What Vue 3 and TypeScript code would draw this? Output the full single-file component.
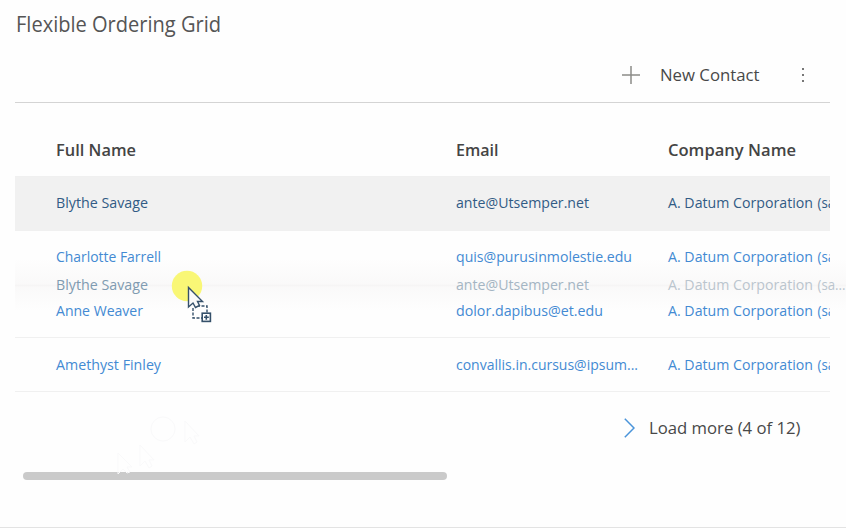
<script setup lang="ts">
interface Contact {
  name: string
  email: string
  nameWidth: number
  emailWidth: number
  state?: 'dragged' | 'target'
}

const company = 'A. Datum Corporation'
const companySuffix = '(sa...'

const contacts: Contact[] = [
  { name: 'Blythe Savage', email: 'ante@Utsemper.net', nameWidth: 92, emailWidth: 133, state: 'dragged' },
  { name: 'Charlotte Farrell', email: 'quis@purusinmolestie.edu', nameWidth: 105, emailWidth: 176, state: 'target' },
  { name: 'Anne Weaver', email: 'dolor.dapibus@et.edu', nameWidth: 87, emailWidth: 147 },
  { name: 'Amethyst Finley', email: 'convallis.in.cursus@ipsum...', nameWidth: 105, emailWidth: 182 },
]
</script>

<template>
  <main class="page">
    <h1 class="title"><svg class="fit" width="206" height="32"><text x="0" y="22" textLength="205" lengthAdjust="spacingAndGlyphs">Flexible Ordering Grid</text></svg></h1>

    <div class="toolbar">
      <button class="command">
        <svg class="plus" width="18" height="18" viewBox="0 0 18 18"><path d="M9 0V18M0 9H18" /></svg>
        <svg class="fit" width="101" height="24"><text x="0" y="18" textLength="99.5" lengthAdjust="spacingAndGlyphs">New Contact</text></svg>
      </button>
      <button class="more" aria-label="More commands">
        <svg width="4" height="16" viewBox="0 0 4 16"><path d="M1 1h2v2H1zM1 7h2v2H1zM1 13h2v2H1z" /></svg>
      </button>
    </div>

    <section class="grid">
      <div class="row header">
        <svg class="fit" width="90" height="24"><text x="0" y="18" textLength="80" lengthAdjust="spacingAndGlyphs">Full Name</text></svg>
        <svg class="fit" width="90" height="24"><text x="0" y="18" textLength="42.5" lengthAdjust="spacingAndGlyphs">Email</text></svg>
        <svg class="fit" width="140" height="24"><text x="0" y="18" textLength="128" lengthAdjust="spacingAndGlyphs">Company Name</text></svg>
      </div>
      <div v-for="c in contacts" :key="c.name" class="row" :class="c.state">
        <svg class="fit" width="200" height="24"><text x="0" y="16.5" :textLength="c.nameWidth" lengthAdjust="spacingAndGlyphs">{{ c.name }}</text></svg>
        <svg class="fit" width="200" height="24"><text x="0" y="16.5" :textLength="c.emailWidth" lengthAdjust="spacingAndGlyphs">{{ c.email }}</text></svg>
        <svg class="fit" width="178" height="24">
          <text x="0" y="16.5" textLength="145" lengthAdjust="spacingAndGlyphs">{{ company }}</text>
          <text x="149.5" y="16.5" textLength="28" lengthAdjust="spacingAndGlyphs">{{ companySuffix }}</text>
        </svg>
      </div>
    </section>

    <button class="load">
      <svg class="chevron" width="11" height="20" viewBox="0 0 11 20"><path d="M0.8 0.8L10 10L0.8 19.2" /></svg>
      <svg class="fit" width="153" height="24"><text x="0" y="17.5" textLength="151.5" lengthAdjust="spacingAndGlyphs">Load more (4 of 12)</text></svg>
    </button>

    <div class="scrollbar"></div>

    <div class="ghost row">
      <svg class="fit g1" width="200" height="24"><text x="0" y="17" :textLength="contacts[0].nameWidth" lengthAdjust="spacingAndGlyphs">{{ contacts[0].name }}</text></svg>
      <svg class="fit g2" width="200" height="24"><text x="0" y="17" :textLength="contacts[0].emailWidth" lengthAdjust="spacingAndGlyphs">{{ contacts[0].email }}</text></svg>
      <svg class="fit g3" width="178" height="24">
        <text x="0" y="17" textLength="145" lengthAdjust="spacingAndGlyphs">{{ company }}</text>
        <text x="149.5" y="17" textLength="28" lengthAdjust="spacingAndGlyphs">{{ companySuffix }}</text>
      </svg>
    </div>

    <svg class="trail" width="170" height="64" viewBox="0 0 170 64">
      <circle cx="133" cy="19" r="12" />
      <path d="M155 11V32L160 27L164 34L167 32L164 26H169Z" />
      <path d="M110 35V56L115 51L119 58L122 56L119 50H124Z" />
      <path d="M88 43V64L93 59L97 63L100 62L97 57H102Z" />
    </svg>

    <svg class="pointer" width="44" height="54" viewBox="0 0 44 54">
      <circle cx="16" cy="16" r="15.2" fill="#f9f776" />
      <path class="dash" d="M26 36H36V43M22 38V48H32" />
      <path class="arrow" d="M17.5 17.5V37L22 33L24.5 37.5L28.5 35.5L26.5 31.5H31.5Z" />
      <rect class="box" x="31.2" y="43.2" width="8.2" height="8.2" />
      <path class="box" d="M35.3 45V49.8M33 47.3H37.8" />
    </svg>
  </main>
</template>

<style>
body {
  margin: 0;
  background: #fefefe;
}
</style>

<style scoped>
.page {
  position: relative;
  box-sizing: border-box;
  display: flex;
  flex-direction: column;
  width: 846px;
  height: 528px;
  padding: 0 16px 0 15px;
  overflow: hidden;
  background: #fefefe;
  border-bottom: 1px solid #e3e3e3;
  font-family: "Open Sans", "Noto Sans", sans-serif;
}
.fit {
  display: block;
  flex: none;
  overflow: visible;
  fill: currentColor;
}
button {
  display: flex;
  align-items: center;
  padding: 0;
  border: 0;
  background: none;
  font: inherit;
}
.title {
  height: 48px;
  margin: 0;
  padding: 10px 0 0 1px;
  box-sizing: border-box;
  font-size: 21.5px;
  font-weight: 400;
  color: #555;
}
.toolbar {
  display: flex;
  align-items: center;
  justify-content: flex-end;
  height: 54px;
  padding-right: 25px;
  border-bottom: 1px solid #d4d4d4;
}
.command {
  gap: 20px;
  font-size: 16.5px;
  color: #484848;
}
.plus path {
  fill: none;
  stroke: #8c8c88;
  stroke-width: 1.5;
}
.more {
  margin-left: 40px;
}
.more path {
  fill: #777;
}
.grid {
  padding-top: 20px;
  overflow: hidden;
}
.row {
  display: grid;
  grid-template-columns: 399.5px 212.5px 178px;
  align-items: center;
  box-sizing: border-box;
  height: 53.8px;
  padding-left: 41px;
  border-bottom: 1px solid #f0f0f0;
  font-size: 15.3px;
  color: #438ad3;
}
.header {
  height: 54px;
  font-size: 16.5px;
  font-weight: 600;
  color: #444;
}
.dragged {
  background: #f1f1f1;
  color: #315b85;
}
.target {
  border-bottom-color: transparent;
}
.load {
  align-self: flex-end;
  gap: 14px;
  height: 36px;
  margin: 18px 28px 0 0;
  font-size: 16.5px;
  color: #484848;
}
.chevron path {
  fill: none;
  stroke: #4a94da;
  stroke-width: 1.5;
}
.scrollbar {
  width: 424px;
  height: 8px;
  margin: 26px 0 0 8px;
  border-radius: 4px;
  background: #cacaca;
}
.ghost {
  position: absolute;
  top: 258px;
  left: 15px;
  width: 831px;
  border: 0;
  background: linear-gradient(rgba(120, 100, 100, 0), rgba(120, 100, 100, 0.03) 48%, rgba(120, 100, 100, 0.06) 51%, rgba(120, 100, 100, 0.03) 54%, rgba(120, 100, 100, 0));
}
.g1 {
  color: #809bb1;
}
.g2 {
  color: #a4b5c3;
}
.g3 {
  color: #bbc5ce;
}
.trail {
  position: absolute;
  top: 410px;
  left: 30px;
  fill: none;
  stroke: #f9f9fa;
}
.pointer {
  position: absolute;
  top: 270px;
  left: 171px;
  fill: none;
}
.arrow {
  fill: #fafafa;
  stroke: #35506a;
  stroke-width: 1.4;
}
.dash {
  stroke: #35506a;
  stroke-width: 1.4;
  stroke-dasharray: 3 1.5;
}
.box {
  stroke: #35506a;
  stroke-width: 1.6;
}
</style>
